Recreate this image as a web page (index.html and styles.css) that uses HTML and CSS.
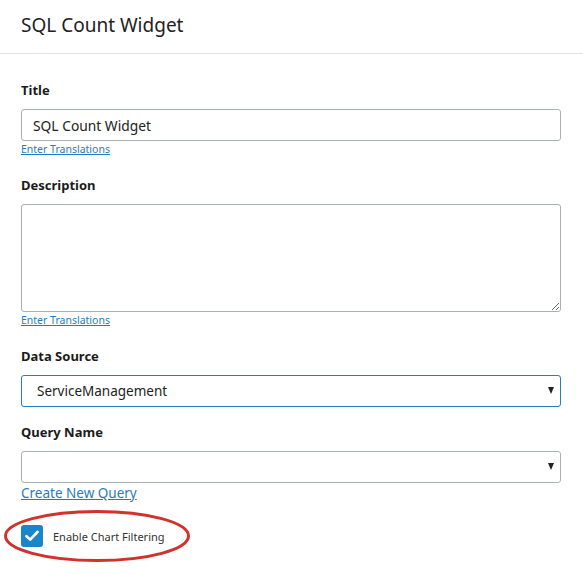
FILE: index.html
```html
<!DOCTYPE html>
<html>
<head>
<meta charset="utf-8">
<link rel="stylesheet" href="styles.css">
</head>
<body>
<header class="header">SQL Count Widget</header>
<form class="form">
  <div class="field">
    <label class="label">Title</label>
    <input class="input" type="text" value="SQL Count Widget">
    <a class="small-link" href="#">Enter Translations</a>
  </div>
  <div class="field">
    <label class="label">Description</label>
    <textarea class="textarea"></textarea>
    <a class="small-link" href="#">Enter Translations</a>
  </div>
  <div class="field field-nolink">
    <label class="label">Data Source</label>
    <div class="select-wrap">
      <select class="select focused"><option>ServiceManagement</option></select>
      <span class="arrow"></span>
    </div>
  </div>
  <div class="field field-tight">
    <label class="label">Query Name</label>
    <div class="select-wrap">
      <select class="select"><option></option></select>
      <span class="arrow"></span>
    </div>
    <a class="big-link" href="#">Create New Query</a>
  </div>
  <div class="check-row">
    <span class="checkbox">
      <svg width="14" height="12" viewBox="0 0 14 12"><path d="M1.5 6.2 L5.2 9.6 L12.5 2" fill="none" stroke="#fff" stroke-width="2.6" stroke-linecap="round" stroke-linejoin="round"/></svg>
    </span>
    <span class="check-label">Enable Chart Filtering</span>
    <svg class="ring" width="190" height="56" viewBox="0 0 190 56"><ellipse cx="94" cy="27" rx="91.5" ry="24.5" fill="none" stroke="#d2322d" stroke-width="3"/></svg>
  </div>
</form>
</body>
</html>
```
FILE: styles.css
```css
* { box-sizing: border-box; }
html, body { min-height: 100%; }
body {
  margin: 0;
  background: #fff;
  font-family: "Noto Sans", "Open Sans", sans-serif;
  color: #222;
}
.header {
  height: 54px;
  border-bottom: 1px solid #e3e3e3;
  padding: 0 21px 4px;
  display: flex;
  align-items: center;
  font-size: 19px;
  color: #222;
}
.form {
  padding: 26px 22px 40px 21px;
  display: flex;
  flex-direction: column;
}
.field {
  display: flex;
  flex-direction: column;
  align-items: flex-start;
  margin-bottom: 19px;
}
.field-nolink { margin-bottom: 15px; }
.field-tight { margin-bottom: 0; }
.label {
  font-size: 13px;
  font-weight: bold;
  line-height: 20px;
  margin-bottom: 9px;
  color: #1b1b1b;
}
.input, .textarea, .select {
  width: 540px;
  border: 1px solid #aab0b4;
  border-radius: 3px;
  font-family: inherit;
  color: #222;
  background: #fff;
  outline: none;
}
.input {
  height: 32px;
  padding: 0 11px;
  font-size: 13.8px;
}
.textarea {
  height: 108px;
  resize: vertical;
  display: block;
  margin: 0;
}
.small-link {
  font-size: 10.5px;
  line-height: 14px;
  color: #1f7cc0;
  text-decoration: underline;
  margin-top: 1px;
}
.select-wrap {
  position: relative;
  width: 540px;
}
.select {
  height: 32px;
  padding: 0 15px;
  font-size: 13.5px;
  -webkit-appearance: none;
  appearance: none;
  display: block;
}
.select.focused { border-color: #2b7db6; }
.arrow {
  position: absolute;
  right: 7px;
  top: 12px;
  width: 0;
  height: 0;
  border-left: 3.5px solid transparent;
  border-right: 3.5px solid transparent;
  border-top: 7px solid #222;
}
.big-link {
  font-size: 13.5px;
  line-height: 20px;
  color: #1f7cc0;
  text-decoration: underline;
  margin-top: 0;
}
.check-row {
  position: relative;
  display: flex;
  align-items: center;
  gap: 10px;
  margin-top: 22px;
  height: 22px;
}
.checkbox {
  width: 22px;
  height: 22px;
  border-radius: 3px;
  background: #1a86c8;
  display: flex;
  align-items: center;
  justify-content: center;
}
.check-label {
  font-size: 11px;
  color: #333;
}
.ring {
  position: absolute;
  left: -18px;
  top: -16px;
  display: block;
  width: 190px;
  height: 56px;
  overflow: visible;
  z-index: 1;
}
```
